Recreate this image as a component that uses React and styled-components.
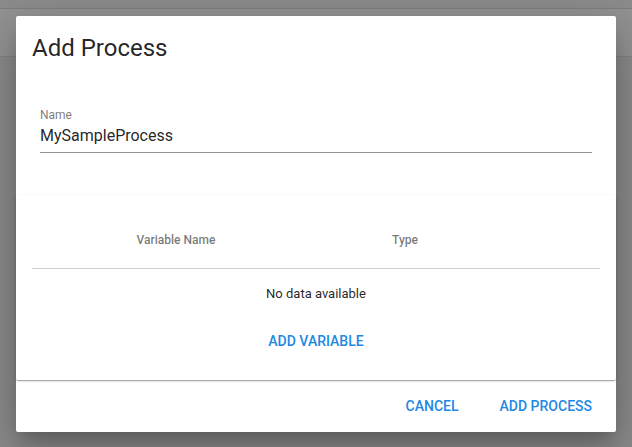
import styled, { createGlobalStyle } from "styled-components";

const GlobalStyle = createGlobalStyle`
  html, body {
    margin: 0;
    padding: 0;
    width: 632px;
    height: 447px;
    overflow: hidden;
    font-family: Roboto, "Liberation Sans", sans-serif;
    -webkit-font-smoothing: antialiased;
  }
`;

const Page = styled.div`
  position: relative;
  width: 632px;
  height: 447px;
  background: #8c8c8c;
  padding-top: 8px;
  box-sizing: border-box;
`;

const Toolbar = styled.div`
  height: 47px;
  background: #939393;
  border-top: 1px solid #7f7f7f;
  border-bottom: 1px solid #838383;
`;

const Dialog = styled.div`
  position: absolute;
  top: 16px;
  left: 16px;
  width: 600px;
  height: 416px;
  background: #fff;
  border-radius: 2px;
  display: flex;
  flex-direction: column;
  box-shadow: 0 11px 15px -7px rgba(0, 0, 0, 0.2),
    0 24px 38px 3px rgba(0, 0, 0, 0.14), 0 9px 46px 8px rgba(0, 0, 0, 0.12);
`;

const Title = styled.h2`
  margin: 0;
  padding: 16px;
  font-size: 24px;
  font-weight: 400;
  line-height: 32px;
  letter-spacing: 0;
  color: rgba(0, 0, 0, 0.87);
`;

const FieldBlock = styled.div`
  padding: 27px 24px 42px;
`;

const Label = styled.div`
  font-size: 12px;
  line-height: 16px;
  color: rgba(0, 0, 0, 0.54);
`;

const Input = styled.div`
  margin-top: 3px;
  padding-bottom: 6px;
  font-size: 16px;
  line-height: 20px;
  color: rgba(0, 0, 0, 0.87);
  border-bottom: 1px solid rgba(0, 0, 0, 0.42);
`;

const InnerCard = styled.div`
  border-radius: 2px;
  padding: 17px 16px 0;
  height: 187px;
  box-sizing: border-box;
  display: flex;
  flex-direction: column;
  box-shadow: 0 2px 1px -1px rgba(0, 0, 0, 0.2), 0 1px 1px 0 rgba(0, 0, 0, 0.14),
    0 1px 3px 0 rgba(0, 0, 0, 0.12);
`;

const Row = styled.div`
  display: grid;
  grid-template-columns: 288px 170px 1fr;
  align-items: center;
  height: ${(p) => p.$height}px;
  border-bottom: ${(p) => (p.$line ? "1px solid rgba(0,0,0,0.2)" : "none")};
`;

const HeadCell = styled.div`
  text-align: center;
  font-size: 12px;
  font-weight: 500;
  color: rgba(0, 0, 0, 0.54);
`;

const Empty = styled.div`
  height: 48px;
  display: flex;
  align-items: center;
  justify-content: center;
  font-size: 13px;
  color: rgba(0, 0, 0, 0.87);
`;

const Center = styled.div`
  display: flex;
  justify-content: center;
  padding-top: 6px;
`;

const FlatButton = styled.button`
  height: 36px;
  padding: 0 16px;
  margin: 0;
  border: none;
  background: transparent;
  font-family: Roboto, "Liberation Sans", sans-serif;
  font-size: 14px;
  font-weight: 500;
  text-transform: uppercase;
  color: #1e88e5;
  cursor: pointer;
  border-radius: 2px;
`;

const Actions = styled.div`
  display: flex;
  justify-content: flex-end;
  align-items: center;
  gap: 9px;
  padding: 8px;
  flex: 1;
`;

export default function App() {
  return (
    <>
      <GlobalStyle />
      <Page>
        <Toolbar />
        <Dialog>
          <Title>Add Process</Title>
          <FieldBlock>
            <Label>Name</Label>
            <Input>MySampleProcess</Input>
          </FieldBlock>
          <InnerCard>
            <Row $height={56} $line>
              <HeadCell>Variable Name</HeadCell>
              <HeadCell>Type</HeadCell>
              <HeadCell />
            </Row>
            <Empty>No data available</Empty>
            <Center>
              <FlatButton>Add Variable</FlatButton>
            </Center>
          </InnerCard>
          <Actions>
            <FlatButton>Cancel</FlatButton>
            <FlatButton>Add Process</FlatButton>
          </Actions>
        </Dialog>
      </Page>
    </>
  );
}
